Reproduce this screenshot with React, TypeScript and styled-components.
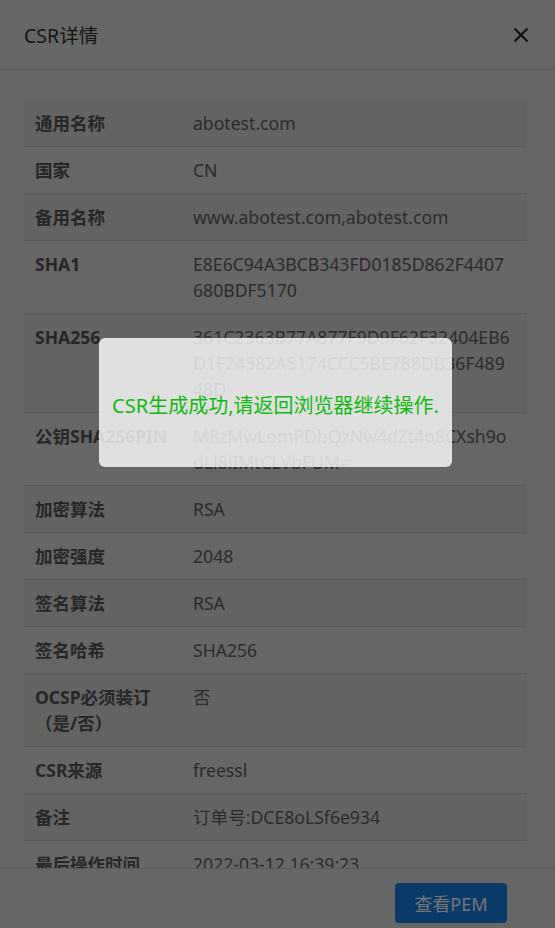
import React from "react";
import styled, { createGlobalStyle } from "styled-components";

const Global = createGlobalStyle`
  html, body { margin: 0; padding: 0; background: #666666; }
  body { font-family: "Open Sans", "Noto Sans CJK SC", sans-serif; }
  * { box-sizing: border-box; }
`;

const Page = styled.div`
  position: relative;
  width: 555px;
  height: 928px;
  display: flex;
  flex-direction: column;
  background: #666666;
  overflow: hidden;
`;

const Header = styled.div`
  height: 70px;
  flex: none;
  display: flex;
  align-items: center;
  justify-content: space-between;
  padding: 0 25px 0 24px;
  border-bottom: 1px solid #5a5a5a;
`;

const Title = styled.div`
  font-family: "Noto Sans", "Noto Sans CJK SC", sans-serif;
  font-size: 19.5px;
  color: #141414;
`;

const Close = styled.button`
  border: none;
  background: none;
  padding: 0;
  width: 18px;
  height: 18px;
  display: flex;
  align-items: center;
  justify-content: center;
  cursor: pointer;
`;

const Body = styled.div`
  flex: 1;
  overflow: hidden;
  padding: 30px 28px 0 24px;
`;

const Table = styled.div`
  display: grid;
  grid-template-columns: 159px 1fr;
`;

const Cell = styled.div<{ $odd: boolean; $label?: boolean }>`
  background: ${(p) => (p.$odd ? "#636363" : "#666666")};
  border-bottom: 1px solid #5a5a5a;
  padding: 10px 8px 10px ${(p) => (p.$label ? "11px" : "10px")};
  line-height: 26px;
  font-family: "Noto Sans", "Noto Sans CJK SC", sans-serif;
  font-size: ${(p) => (p.$label ? "17.5px" : "17.6px")};
  font-weight: ${(p) => (p.$label ? 700 : 400)};
  color: ${(p) => (p.$label ? "#262626" : "#2b2b2b")};
  word-break: break-all;
`;

const Line = styled.span`
  display: block;
  white-space: nowrap;
`;

const Footer = styled.div`
  height: 60px;
  flex: none;
  border-top: 1px solid #5a5a5a;
  display: flex;
  justify-content: flex-end;
  align-items: flex-start;
  padding: 14px 48px 0 0;
`;

const Button = styled.button`
  width: 112px;
  height: 40px;
  border: none;
  border-radius: 4px;
  background: #0b3b69;
  color: #767676;
  font-family: "Noto Sans", "Noto Sans CJK SC", sans-serif;
  font-size: 18px;
`;

const Toast = styled.div`
  position: absolute;
  left: 99px;
  top: 338px;
  width: 353px;
  height: 129px;
  border-radius: 6px;
  background: rgba(255, 255, 255, 0.8);
  display: flex;
  align-items: center;
  justify-content: center;
  font-family: "Noto Sans", "Noto Sans CJK SC", sans-serif;
  font-size: 20px;
  color: #10b910;
  padding-top: 3px;
`;

const rows: [string, string[]][] = [
  ["通用名称", ["abotest.com"]],
  ["国家", ["CN"]],
  ["备用名称", ["www.abotest.com,abotest.com"]],
  ["SHA1", ["E8E6C94A3BCB343FD0185D862F4407", "680BDF5170"]],
  ["SHA256", ["361C2363B77A877F9D9F62F32404EB6", "D1F24382A5174CCC5BE788DB36F489", "48D"]],
  ["公钥SHA256PIN", ["M8zMwLomPDbQzNw4dZt4o8CXsh9o", "dLl8iIMtCLVbFUM="]],
  ["加密算法", ["RSA"]],
  ["加密强度", ["2048"]],
  ["签名算法", ["RSA"]],
  ["签名哈希", ["SHA256"]],
  ["OCSP必须装订（是/否）", ["否"]],
  ["CSR来源", ["freessl"]],
  ["备注", ["订单号:DCE8oLSf6e934"]],
  ["最后操作时间", ["2022-03-12 16:39:23"]],
];

export default function App() {
  return (
    <Page>
      <Global />
      <Header>
        <Title>CSR详情</Title>
        <Close aria-label="关闭">
          <svg width="16" height="16" viewBox="0 0 16 16">
            <path d="M1.5 1.5 L14.5 14.5 M14.5 1.5 L1.5 14.5" stroke="#111" strokeWidth="2.2" strokeLinecap="butt" />
          </svg>
        </Close>
      </Header>
      <Body>
        <Table>
          {rows.map(([k, v], i) => (
            <React.Fragment key={k}>
              <Cell $odd={i % 2 === 0} $label>
                {k}
              </Cell>
              <Cell $odd={i % 2 === 0}>
                {v.map((line) => (
                  <Line key={line}>{line}</Line>
                ))}
              </Cell>
            </React.Fragment>
          ))}
        </Table>
      </Body>
      <Footer>
        <Button>查看PEM</Button>
      </Footer>
      <Toast>CSR生成成功,请返回浏览器继续操作.</Toast>
    </Page>
  );
}
